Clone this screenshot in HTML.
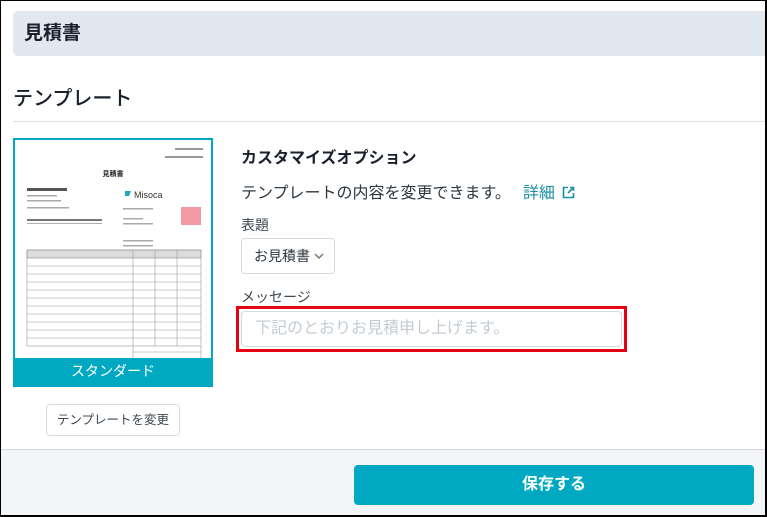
<!DOCTYPE html>
<html><head><meta charset="utf-8"><style>
*{box-sizing:border-box;margin:0;padding:0}
body{width:767px;height:517px;overflow:hidden;background:#fff;font-family:"Liberation Sans","Noto Sans CJK JP",sans-serif;color:#1f2933;position:relative}
.frame{position:absolute;left:0;top:0;width:767px;height:517px;border:1px solid #000;border-right:2px solid #000;border-bottom:2px solid #000;pointer-events:none;z-index:5}
.hdr{position:absolute;left:13px;top:11px;width:754px;height:45px;background:#e2e8f0;border-radius:5px 0 0 5px;font-size:19px;font-weight:bold;padding-left:11px;line-height:45px;color:#1a202c}
.h2{position:absolute;left:13px;top:82px;font-size:20px;color:#1a202c;font-weight:500}
.div{position:absolute;left:13px;top:121px;width:754px;height:1px;background:#dde1e6}
.card{position:absolute;left:13px;top:138px;width:200px;height:249px;border:2px solid #00a9c1;background:#fff;overflow:hidden}
.lab{position:absolute;left:0;bottom:0;width:100%;height:27px;background:#00a9c1;color:#fff;font-size:14px;text-align:center;line-height:27px}
.btn2{position:absolute;left:46px;top:404px;width:134px;height:32px;border:1px solid #d5dae1;border-radius:4px;font-size:12.5px;color:#3d4750;text-align:center;line-height:30px}
.t1{position:absolute;left:241px;top:144px;font-size:16px;font-weight:bold;color:#1a202c}
.t2{position:absolute;left:241px;top:179px;font-size:16px;color:#2d3740}
.t2 a{color:#1b8fa6;margin-left:12px}
.l{position:absolute;left:241px;font-size:14px;color:#3d4750}
.sel{position:absolute;left:241px;top:238px;width:94px;height:36px;border:1px solid #d5dae1;border-radius:4px;font-size:14px;padding-left:12px;line-height:34px;color:#2d3740}
.red{position:absolute;left:236px;top:306px;width:391px;height:46px;border:3px solid #e60012}
.inp{position:absolute;left:241px;top:311px;width:381px;height:36px;border:1px solid #d5dae1;border-radius:4px;font-size:16px;padding-left:13px;line-height:34px;color:#c4cbd3}
.foot{position:absolute;left:0;top:449px;width:767px;height:68px;background:#f4f5f8;border-top:1px solid #d3d6db}
.save{position:absolute;left:354px;top:465px;width:400px;height:40px;background:#00a9c1;border-radius:4px;color:#fff;font-weight:bold;font-size:16px;text-align:center;line-height:40px}
</style></head><body>
<div class="hdr">見積書</div>
<div class="h2">テンプレート</div>
<div class="div"></div>
<div class="card">
<svg width="196" height="220" viewBox="0 0 196 220" style="position:absolute;left:0;top:0" font-family="Liberation Sans,Noto Sans CJK JP,sans-serif">
<rect x="160" y="8" width="28" height="2" fill="#999"/>
<rect x="150" y="16" width="38" height="2" fill="#999"/>
<text x="98" y="36" font-size="7" font-weight="bold" text-anchor="middle" fill="#222">見積書</text>
<rect x="12" y="48" width="40" height="3" fill="#555"/>
<rect x="12" y="55" width="30" height="1.5" fill="#aaa"/>
<rect x="12" y="60" width="34" height="1.5" fill="#aaa"/>
<rect x="12" y="67" width="42" height="1.5" fill="#aaa"/>
<rect x="12" y="79" width="75" height="2" fill="#777"/>
<rect x="12" y="83" width="75" height="0.8" fill="#999"/>
<path d="M110 51h6l-2 5h-4z" fill="#1fa7c2"/>
<text x="119" y="58" font-size="9" fill="#333">Misoca</text>
<rect x="108" y="68" width="30" height="1.5" fill="#aaa"/>
<rect x="108" y="78" width="20" height="1.5" fill="#aaa"/>
<rect x="108" y="83" width="30" height="1.5" fill="#aaa"/>
<rect x="108" y="100" width="30" height="1.5" fill="#aaa"/>
<rect x="108" y="105" width="30" height="1.5" fill="#aaa"/>
<rect x="166" y="67" width="20" height="18" fill="#f19aa6"/>
<rect x="12" y="110" width="174" height="8" fill="#ddd" stroke="#888" stroke-width="0.6"/>
<g stroke="#999" stroke-width="0.6" fill="none">
<rect x="12" y="110" width="174" height="96"/>
<line x1="118" y1="110" x2="118" y2="220"/><line x1="140" y1="110" x2="140" y2="206"/><line x1="162" y1="110" x2="162" y2="206"/>
<line x1="12" y1="126" x2="186" y2="126"/><line x1="12" y1="134" x2="186" y2="134"/><line x1="12" y1="142" x2="186" y2="142"/><line x1="12" y1="150" x2="186" y2="150"/><line x1="12" y1="158" x2="186" y2="158"/><line x1="12" y1="166" x2="186" y2="166"/><line x1="12" y1="174" x2="186" y2="174"/><line x1="12" y1="182" x2="186" y2="182"/><line x1="12" y1="190" x2="186" y2="190"/><line x1="12" y1="198" x2="186" y2="198"/>
<line x1="118" y1="212" x2="186" y2="212"/><line x1="186" y1="206" x2="186" y2="220"/>
</g>
</svg>
<div class="lab">スタンダード</div></div>
<div class="btn2">テンプレートを変更</div>
<div class="t1">カスタマイズオプション</div>
<div class="t2">テンプレートの内容を変更できます。<a>詳細</a> <svg width="13" height="13" viewBox="0 0 13 13" style="vertical-align:-1px;margin-left:3px"><path d="M6 1.5H1.5v10h10V7M8 1.5h3.5V5M11.5 1.5 6 7" fill="none" stroke="#1b8fa6" stroke-width="1.6"/></svg></div>
<div class="l" style="top:215px">表題</div>
<div class="sel">お見積書 <svg width="10" height="7" viewBox="0 0 10 7" style="vertical-align:1px"><path d="M1 1l4 4 4-4" fill="none" stroke="#777" stroke-width="1.5"/></svg></div>
<div class="l" style="top:287px">メッセージ</div>
<div class="red"></div>
<div class="inp">下記のとおりお見積申し上げます。</div>
<div class="foot"></div>
<div class="save">保存する</div>
<div class="frame"></div>
</body></html>
